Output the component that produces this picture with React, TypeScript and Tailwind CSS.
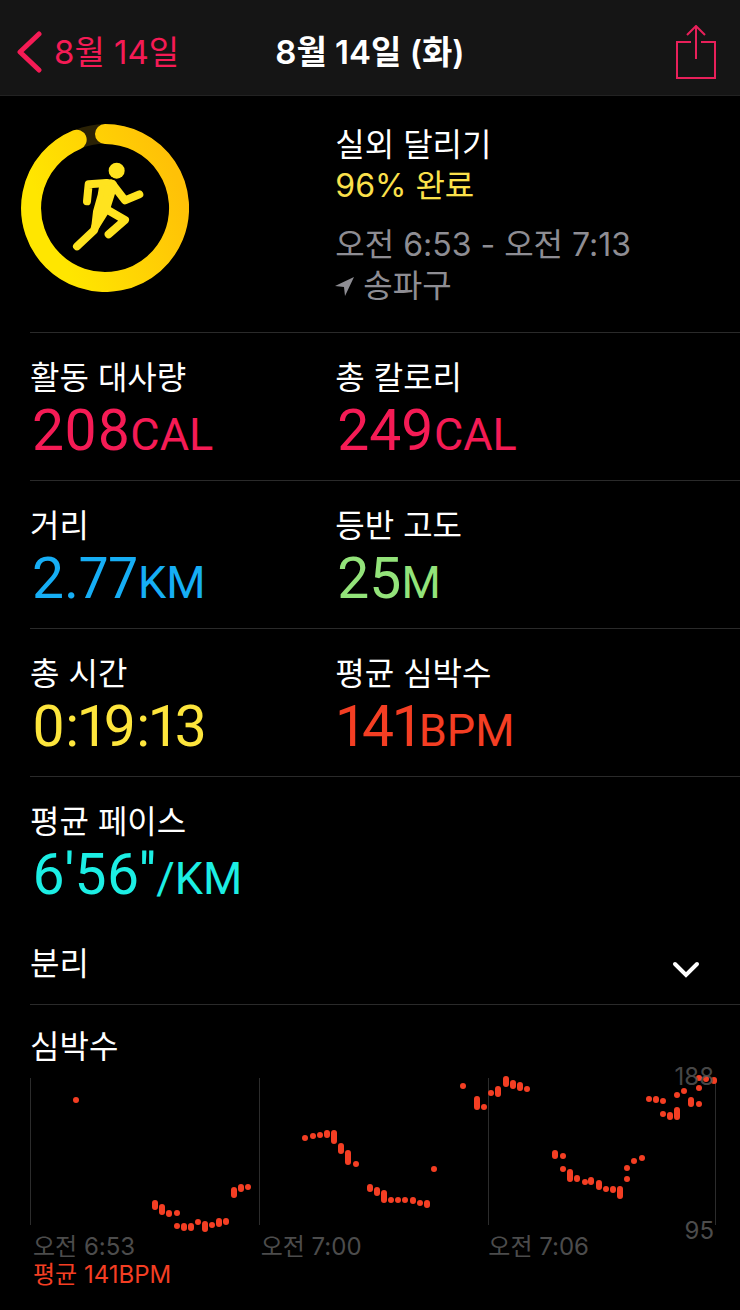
import React from 'react';

interface Metric {
  label: string;
  value: string;
  unit?: string;
  color: string;
}

const textFont = "font-['Inter','Noto_Sans_CJK_KR',sans-serif]";
const valueFont = "font-['Roboto','Noto_Sans_CJK_KR',sans-serif]";

const metricRows: Metric[][] = [
  [
    { label: '활동 대사량', value: '208', unit: 'CAL', color: 'text-[#f51b55]' },
    { label: '총 칼로리', value: '249', unit: 'CAL', color: 'text-[#f51b55]' },
  ],
  [
    { label: '거리', value: '2.77', unit: 'KM', color: 'text-[#16aef5]' },
    { label: '등반 고도', value: '25', unit: 'M', color: 'text-[#93e37a]' },
  ],
  [
    { label: '총 시간', value: '0:19:13', color: 'text-[#fde53c]' },
    { label: '평균 심박수', value: '141', unit: 'BPM', color: 'text-[#f43e23]' },
  ],
];

const pace: Metric = { label: '평균 페이스', value: "6'56''", unit: '/KM', color: 'text-[#1ceee4]' };

// [x, highest, lowest] for every sample
const samples: [number, number, number][] = [
  [46, 29, 29], [125, 132, 136], [132, 136, 141], [139, 142, 143], [147, 142, 142],
  [147, 155, 155], [154, 155, 157], [161, 155, 157], [168, 151, 151], [175, 153, 158],
  [182, 154, 154], [189, 150, 153], [196, 150, 151], [204, 119, 124], [211, 116, 118],
  [218, 116, 116], [275, 67, 67], [283, 65, 65], [290, 64, 64], [297, 62, 64],
  [304, 62, 70], [311, 75, 80], [318, 82, 91], [326, 93, 93], [340, 116, 118],
  [347, 119, 122], [354, 122, 129], [361, 129, 129], [368, 129, 129], [375, 129, 129],
  [383, 129, 130], [390, 132, 132], [397, 132, 134], [404, 98, 98], [433, 15, 15],
  [447, 28, 36], [454, 36, 36], [461, 22, 22], [468, 18, 23], [476, 8, 13],
  [483, 12, 15], [490, 14, 17], [497, 18, 18], [525, 82, 85], [533, 85, 85],
  [533, 98, 98], [540, 101, 108], [547, 107, 108], [555, 111, 111], [561, 109, 111],
  [569, 112, 116], [576, 118, 118], [583, 118, 119], [590, 118, 125], [597, 97, 97],
  [597, 108, 108], [604, 90, 90], [612, 87, 87], [619, 28, 28], [626, 28, 29],
  [633, 30, 30], [633, 43, 43], [640, 44, 46], [647, 39, 46], [647, 24, 24],
  [654, 20, 20], [661, 29, 33], [669, 33, 33], [669, 17, 17], [669, 7, 7],
  [676, 8, 8], [684, 9, 10],
];

const gridLines = [0.5, 229.5, 458.5, 685.5];

const times = ['오전 6:53', '오전 7:00', '오전 7:06'];

const ActivityRing = () => (
  <svg className="h-[168px] w-[168px]" viewBox="33 27 504 504" fill="none" role="img" aria-label="96%">
    <defs>
      <linearGradient id="ring" x1="0.9" y1="0.1" x2="0.05" y2="0.45">
        <stop offset="0" stopColor="#ffc107" />
        <stop offset="1" stopColor="#ffe600" />
      </linearGradient>
    </defs>
    <circle cx="285" cy="279" r="222" stroke="#2b2205" strokeWidth="58" />
    <path d="M285 57A222 222 0 1 1 200 74" stroke="url(#ring)" strokeWidth="60" strokeLinecap="round" />
    <g stroke="#ffe31f" strokeWidth="24" strokeLinecap="round" strokeLinejoin="round">
      <circle cx="320" cy="167" r="24" fill="#ffe31f" stroke="none" />
      <path d="M231 259L236 208L290 204" />
      <path d="M308 208L345 256L388 238" />
      <path d="M284 280L345 315L296 358" />
      <path d="M272 290L252 346L201 394" />
      <path d="M278 204L304 202Q314 204 312 216L290 286L260 334L252 342L258 290L272 240Z" fill="#ffe31f" strokeWidth="18" />
    </g>
  </svg>
);

const MetricCell = ({ label, value, unit, color }: Metric) => (
  <div>
    <dt className="text-[32px] leading-10">{label}</dt>
    <dd className={`${valueFont} ${color} pl-[2px] text-[57px] leading-[66px] proportional-nums`}>
      {value}
      {unit && <span className="text-[45px] leading-none">{unit}</span>}
    </dd>
  </div>
);

const HeartRateChart = () => (
  <div className="relative mt-1 mr-6">
    <svg className="block w-full" viewBox="0 0 686 162" overflow="visible" role="img" aria-label="심박수">
      {gridLines.map((x) => (
        <line key={x} x1={x} y1="7" x2={x} y2="154" stroke="#2c2c2c" />
      ))}
      {samples.map(([x, high, low]) => (
        <line
          key={`${x}-${high}`}
          x1={x}
          y1={high}
          x2={x}
          y2={low + 0.01}
          stroke="#f43e23"
          strokeWidth="6"
          strokeLinecap="round"
        />
      ))}
    </svg>
    <div className="grid grid-cols-3 pl-[3px] text-2xl leading-7 text-[#4c4c4c]">
      {times.map((time) => (
        <span key={time}>{time}</span>
      ))}
    </div>
    <span className="absolute -top-2 right-[2px] text-2xl leading-7 text-[#5a5a5a]/80">188</span>
    <span className="absolute bottom-4 right-[2px] text-2xl leading-7 text-[#4c4c4c]">95</span>
  </div>
);

const App = () => {
  return (
    <div className={`${textFont} min-h-screen bg-black text-white`}>
      <header className="grid h-24 grid-cols-[1fr_auto_1fr] items-center border-b border-[#222] bg-[#151515] px-6 pt-2">
        <button type="button" className="-ml-2 flex items-center gap-3 text-[33px] leading-10 text-[#f51b55]">
          <svg className="h-[42px] w-[26px]" viewBox="0 0 26 42" fill="none">
            <path d="M23 3L4 21L23 39" stroke="currentColor" strokeWidth="5" strokeLinecap="round" strokeLinejoin="round" />
          </svg>
          8월 14일
        </button>
        <h1 className="text-[33px] leading-10 font-semibold">8월 14일 (화)</h1>
        <button type="button" aria-label="공유" className="justify-self-end text-[#e8205a]">
          <svg className="h-[54px] w-10" viewBox="0 0 40 54" fill="none" stroke="currentColor" strokeWidth="2">
            <path d="M15 17H1V53H39V17H25" />
            <path d="M20 34V2M11 10L20 1L29 10" />
          </svg>
        </button>
      </header>

      <main className="pl-[30px]">
        <section className="grid grid-cols-[43%_1fr] border-b border-[#2a2a2a] pt-7 pb-[26px]">
          <div className="-ml-[9px]">
            <ActivityRing />
          </div>
          <div className="text-[32px] leading-[41px]">
            <h2>실외 달리기</h2>
            <p className="text-[#fbe14b]">96% 완료</p>
            <p className="mt-[18px] text-[#8e8d93]">오전 6:53 - 오전 7:13</p>
            <p className="flex items-center gap-2 text-[#8e8d93]">
              <svg className="h-5 w-5" viewBox="0 0 20 20" fill="currentColor">
                <path d="M19 1L10 20L9 11L0 10Z" />
              </svg>
              송파구
            </p>
          </div>
        </section>

        {metricRows.map((row, idx) => (
          <dl key={idx} className="grid grid-cols-[43%_1fr] border-b border-[#2a2a2a] pt-[25px] pb-4">
            {row.map((item) => (
              <MetricCell key={item.label} {...item} />
            ))}
          </dl>
        ))}

        <section className="border-b border-[#2a2a2a] pt-[25px] pb-5">
          <dl>
            <MetricCell {...pace} />
          </dl>
          <button type="button" className="mt-9 flex w-full items-center justify-between pr-10 text-[32px] leading-10">
            분리
            <svg className="mt-3 h-5 w-7" viewBox="0 0 28 20" fill="none">
              <path d="M3 4L14 15L25 4" stroke="currentColor" strokeWidth="4" strokeLinecap="round" />
            </svg>
          </button>
        </section>

        <section className="pt-[22px] pb-5">
          <h2 className="text-[32px] leading-10">심박수</h2>
          <HeartRateChart />
          <p className="pl-[3px] text-2xl leading-7 text-[#f43e23]">평균 141BPM</p>
        </section>
      </main>
    </div>
  );
};

export default App;
